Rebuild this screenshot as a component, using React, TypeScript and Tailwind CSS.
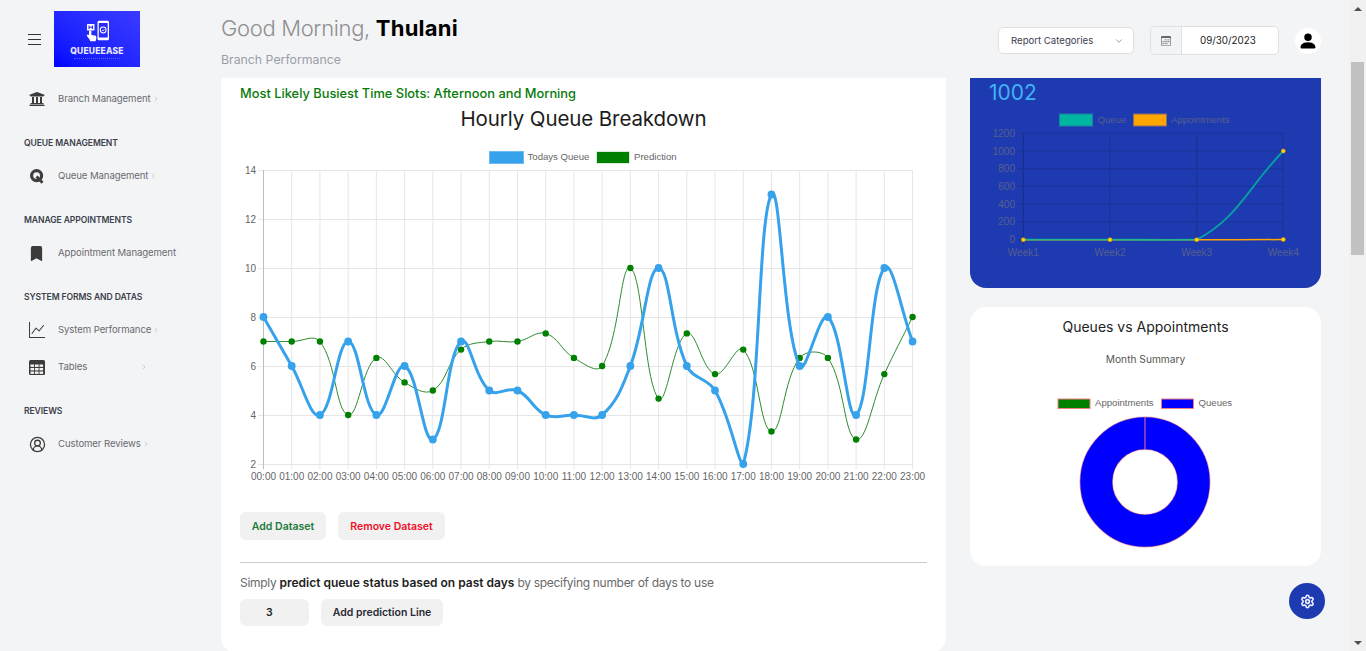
import { BsBookmarkFill, BsCalendar3, BsGraphUp, BsPersonFill } from "react-icons/bs";
import { FaUniversity } from "react-icons/fa";
import { ChevronDown, ChevronRight, CircleUserRound, Settings } from "lucide-react";
import type { ReactNode } from "react";

type Pt = [number, number];

// same curve chart.js draws with tension 0.4
function splinePath(pts: Pt[], top: number, bottom: number) {
    const t = 0.4;
    const ctrl = pts.map((cur, i) => {
        const prev = pts[i - 1] ?? cur;
        const next = pts[i + 1] ?? cur;
        const d01 = Math.hypot(cur[0] - prev[0], cur[1] - prev[1]);
        const d12 = Math.hypot(next[0] - cur[0], next[1] - cur[1]);
        const sum = d01 + d12 || 1;
        const fa = (t * d01) / sum;
        const fb = (t * d12) / sum;
        const clamp = (y: number) => Math.min(bottom, Math.max(top, y));
        return {
            p: [cur[0] - fa * (next[0] - prev[0]), clamp(cur[1] - fa * (next[1] - prev[1]))],
            n: [cur[0] + fb * (next[0] - prev[0]), clamp(cur[1] + fb * (next[1] - prev[1]))],
        };
    });
    let d = `M${pts[0][0]} ${pts[0][1]}`;
    for (let i = 1; i < pts.length; i++) {
        d += ` C${ctrl[i - 1].n[0]} ${ctrl[i - 1].n[1]} ${ctrl[i].p[0]} ${ctrl[i].p[1]} ${pts[i][0]} ${pts[i][1]}`;
    }
    return d;
}

const hours = Array.from({ length: 24 }, (_, i) => `${String(i).padStart(2, "0")}:00`);
const queue = [8, 6, 4, 7, 4, 6, 3, 7, 5, 5, 4, 4, 4, 6, 10, 6, 5, 2, 13, 6, 8, 4, 10, 7];
const prediction = [7, 7, 7, 4, 6.33, 5.33, 5, 6.67, 7, 7, 7.33, 6.33, 6, 10, 4.67, 7.33, 5.67, 6.67, 3.33, 6.33, 6.33, 3, 5.67, 8];

const hx = (i: number) => 263.5 + i * 28.22;
const hy = (v: number) => 464 - (v - 2) * 24.5;

function HourlyChart() {
    const queuePts = queue.map((v, i): Pt => [hx(i), hy(v)]);
    const predPts = prediction.map((v, i): Pt => [hx(i), hy(v)]);
    return (
        <svg width="687" height="345" viewBox="240 145 687 345" className="block" fontFamily="'Liberation Sans', sans-serif">
            <rect x="489.5" y="151.5" width="34" height="12" fill="#36a2eb" stroke="#6db9f0" />
            <text x="527.5" y="160" fontSize="9.6" fill="#666">Todays Queue</text>
            <rect x="596.5" y="151.5" width="33" height="12" fill="#008000" stroke="#d8ead8" />
            <text x="634" y="160" fontSize="9.6" fill="#666">Prediction</text>

            {[14, 12, 10, 8, 6, 4, 2].map((v) => (
                <g key={v}>
                    <line x1="258" x2="912.5" y1={hy(v) + 0.5} y2={hy(v) + 0.5} stroke="#e6e6e6" />
                    <text x="256" y={hy(v) + 3.5} fontSize="10" fill="#666" textAnchor="end">{v}</text>
                </g>
            ))}
            {hours.map((h, i) => (
                <g key={h}>
                    <line x1={hx(i)} x2={hx(i)} y1="170" y2="469" stroke={i === 0 ? "#bdbdbd" : "#e6e6e6"} />
                    <text x={hx(i)} y="480" fontSize="10" fill="#666" textAnchor="middle">{h}</text>
                </g>
            ))}

            <path d={splinePath(predPts, 170, 464)} fill="none" stroke="#2e8b2e" strokeWidth="1" />
            {predPts.map((p) => (
                <circle key={p[0]} cx={p[0]} cy={p[1]} r="3.2" fill="#008000" />
            ))}
            <path d={splinePath(queuePts, 170, 464)} fill="none" stroke="#36a2eb" strokeWidth="3" />
            {queuePts.map((p) => (
                <circle key={p[0]} cx={p[0]} cy={p[1]} r="3.9" fill="#36a2eb" />
            ))}
        </svg>
    );
}

function WeeklyChart() {
    const xs = [1023.3, 1110, 1196.7, 1283.3];
    const wy = (v: number) => 239.7 - v * 0.0887;
    const q: Pt[] = [0, 0, 0, 1000].map((v, i) => [xs[i], wy(v)]);
    const a: Pt[] = [0, 0, 0, 1].map((v, i) => [xs[i], wy(v)]);
    return (
        <svg width="351" height="180" viewBox="970 105 351 180" className="block" fontFamily="'Liberation Sans', sans-serif">
            <rect x="1059.5" y="114" width="33" height="12" fill="#00b5a0" stroke="#1a7fa0" />
            <text x="1097.5" y="122.5" fontSize="9.6" fill="#565f8e">Queue</text>
            <rect x="1133.5" y="114" width="33" height="12" fill="#ffa500" stroke="#8d6a6a" />
            <text x="1171" y="122.5" fontSize="9.6" fill="#565f8e">Appointments</text>

            {[1200, 1000, 800, 600, 400, 200, 0].map((v) => (
                <g key={v}>
                    <line x1="1018" x2="1283.3" y1={wy(v)} y2={wy(v)} stroke="#1b3295" />
                    <text x="1015" y={wy(v) + 3.5} fontSize="10" fill="#565f8e" textAnchor="end">{v}</text>
                </g>
            ))}
            {xs.map((x, i) => (
                <g key={x}>
                    <line x1={x} x2={x} y1="133" y2="245" stroke={i === 0 ? "#182c86" : "#1b3295"} />
                    <text x={x} y="256" fontSize="10" fill="#565f8e" textAnchor="middle">{`Week${i + 1}`}</text>
                </g>
            ))}

            <path d={splinePath(a, 133, 240)} fill="none" stroke="#ffa500" strokeWidth="1.5" />
            <path d={splinePath(q, 133, 240)} fill="none" stroke="#00b5a0" strokeWidth="1.8" opacity="0.85" />
            {[...a, q[3]].map((p) => (
                <circle key={p[0] + p[1]} cx={p[0]} cy={p[1]} r="2" fill="#ffd400" stroke="#e8a000" strokeWidth="0.5" />
            ))}
        </svg>
    );
}

function Donut() {
    return (
        <svg width="351" height="160" viewBox="970 392 351 160" className="block" fontFamily="'Liberation Sans', sans-serif">
            <rect x="1058" y="399" width="32" height="9.5" fill="#008000" stroke="#f08080" />
            <text x="1095" y="406" fontSize="9.6" fill="#666">Appointments</text>
            <rect x="1161.5" y="399" width="32" height="9.5" fill="#0000ff" stroke="#f08080" />
            <text x="1198.5" y="406" fontSize="9.6" fill="#666">Queues</text>
            <circle cx="1145" cy="482" r="48.75" fill="none" stroke="#f4a0a0" strokeWidth="33.5" />
            <circle cx="1145" cy="482" r="48.75" fill="none" stroke="#0000ff" strokeWidth="32" />
            <line x1="1145" x2="1145" y1="417" y2="449.5" stroke="#e8788c" />
        </svg>
    );
}

function Logo() {
    return (
        <div className="w-[86px] h-[56px] bg-gradient-to-tr from-[#0000ff] to-[#3a3aff] flex flex-col items-center pt-[9px]">
            <svg width="26" height="25" viewBox="0 0 26 25" fill="white">
                <rect x="3" y="4" width="7.5" height="6.5" rx="0.5" />
                <path d="M5 5.5v3.5M8.4 5.5v3.5M5 7.2h3.4" stroke="#1a1aff" strokeWidth="1" />
                <path d="M5 11.5a1.2 1.2 0 0 1 2.4 0v3.4l3.6.7a1.6 1.6 0 0 1 1.3 1.6v1.6l-.8 2.4H6.2l-.6-1.8-2.6-3.4c-.6-1 .7-2 1.5-1.2l.5.5z" />
                <rect x="13.5" y="0.8" width="11.5" height="19.5" rx="1.5" />
                <rect x="14.8" y="3" width="8.9" height="14.5" fill="#2a2aff" />
                <circle cx="19.2" cy="10" r="3.4" fill="white" />
                <circle cx="19.2" cy="10" r="2.4" fill="#2a2aff" />
                <path d="M17.9 10l1 1 1.6-1.8" stroke="white" strokeWidth="0.8" fill="none" />
            </svg>
            <span className="text-[8.5px] leading-[11px] mt-[1px] font-extrabold text-[#e8e8ff] tracking-[0.2px]">QUEUEEASE</span>
            <div className="mt-[1px] w-[46px] h-[1px] border-t border-dotted border-[#5a5aff]" />
        </div>
    );
}

function QIcon() {
    return (
        <svg width="16" height="16" viewBox="0 0 16 16" fill="none" stroke="#3f3f3f" strokeWidth="3.2">
            <circle cx="7.6" cy="7.6" r="5" />
            <path d="M7.5 8.5l6 6.2" strokeWidth="2.8" />
        </svg>
    );
}

function HamburgerIcon() {
    return (
        <svg width="13" height="11" viewBox="0 0 13 11" stroke="#333" strokeWidth="1">
            <path d="M0 .5h13M0 5.5h13M0 10.5h13" />
        </svg>
    );
}

function TableIcon() {
    const cols = [1.5, 6, 10.5];
    const rows = [4.5, 8, 11.5];
    return (
        <svg width="16" height="15" viewBox="0 0 16 15">
            <rect width="16" height="15" rx="1.5" fill="#3b3b3b" />
            {rows.map((y) =>
                cols.map((x) => <rect key={`${x}-${y}`} x={x} y={y} width="3.6" height="2.4" fill="#f3f4f6" />)
            )}
        </svg>
    );
}

function NavItem({ icon, label, arrow }: { icon: ReactNode; label: string; arrow?: number }) {
    return (
        <div className="flex items-center h-[37px] pl-[29px]">
            <span className="w-[29px] flex items-center text-[#3b3b3b]">{icon}</span>
            <span className="text-[9.6px] text-[#6a6a70] whitespace-nowrap tracking-[-0.1px]">{label}</span>
            {arrow !== undefined && <ChevronRight size={8} strokeWidth={1.5} className="text-[#a8a8a8]" style={{ marginLeft: arrow }} />}
        </div>
    );
}

function SectionLabel({ children }: { children: ReactNode }) {
    return <div className="h-4 mt-[17px] mb-[7px] pl-[24px] text-[8.6px] leading-4 font-semibold text-[#3d414b] tracking-[-0.1px]">{children}</div>;
}

function Sidebar() {
    return (
        <aside className="w-[221px] shrink-0">
            <div className="flex items-center pl-[28px] pt-[11px] gap-[13px]">
                <HamburgerIcon />
                <Logo />
            </div>
            <div className="mt-[13.5px]">
                <NavItem icon={<FaUniversity size={16} />} label="Branch Management" arrow={1} />
                <SectionLabel>QUEUE MANAGEMENT</SectionLabel>
                <NavItem icon={<QIcon />} label="Queue Management" arrow={1} />
                <SectionLabel>MANAGE APPOINTMENTS</SectionLabel>
                <NavItem icon={<BsBookmarkFill size={15} />} label="Appointment Management" />
                <SectionLabel>SYSTEM FORMS AND DATAS</SectionLabel>
                <NavItem icon={<BsGraphUp size={16} />} label="System Performance" arrow={1} />
                <NavItem icon={<TableIcon />} label="Tables" arrow={53} />
                <SectionLabel>REVIEWS</SectionLabel>
                <NavItem icon={<CircleUserRound size={17} strokeWidth={1.8} />} label="Customer Reviews" arrow={1} />
            </div>
        </aside>
    );
}

function Header() {
    return (
        <header className="h-[78px] shrink-0 flex justify-between pr-[28px]">
            <div className="pt-[13px]">
                <div className="text-[22px] leading-[30px] font-light text-[#8f8f8f] tracking-[-0.34px]">
                    Good Morning, <span className="font-bold text-black tracking-[0.25px]">Thulani</span>
                </div>
                <div className="mt-[9px] text-[12.3px] leading-4 text-[#9a9ea6]">Branch Performance</div>
            </div>
            <div className="flex items-start pt-[26px]">
                <div className="mt-[1px] w-[136px] h-[27px] bg-white border border-[#e0e0e0] rounded-[5px] flex items-center justify-between pl-[12px] pr-[9px] pt-[1px] text-[9.6px] text-[#3e3e50]">
                    Report Categories
                    <ChevronDown size={10} strokeWidth={1.5} className="text-[#666]" />
                </div>
                <div className="ml-[16px] w-[129px] h-[29px] bg-white border border-[#e0e0e0] rounded-[5px] flex">
                    <div className="w-[31px] bg-[#f3f4f6] border-r border-[#e0e0e0] rounded-l-[5px] flex items-center justify-center text-[#666]">
                        <BsCalendar3 size={10} />
                    </div>
                    <div className="flex-1 pl-[18px] text-[9.8px] leading-[27px] text-[#222]">09/30/2023</div>
                </div>
                <div className="ml-[16px] mt-[2px] w-[26px] h-[26px] bg-white rounded-full flex items-center justify-center text-black">
                    <BsPersonFill size={20} />
                </div>
            </div>
        </header>
    );
}

function MainCard() {
    return (
        <section className="w-[725px] h-[575px] shrink-0 bg-white rounded-b-2xl px-[19px] pt-[8px]">
            <div className="text-[12.85px] leading-4 font-medium text-[#087a08]">Most Likely Busiest Time Slots: Afternoon and Morning</div>
            <h2 className="mt-[1px] text-[20.5px] leading-[32px] text-center text-[#1c1c1c] tracking-[-0.1px]">Hourly Queue Breakdown</h2>
            <div className="mt-[10px]">
                <HourlyChart />
            </div>
            <div className="mt-[22px] flex gap-[12px]">
                <button className="w-[86px] h-[28px] pt-[1px] rounded-md bg-[#f1f1f1] text-[10.5px] font-semibold text-[#1f7a3c]">Add Dataset</button>
                <button className="w-[107px] h-[28px] pt-[1px] rounded-md bg-[#f1f1f1] text-[10.5px] font-semibold text-[#f0102a]">Remove Dataset</button>
            </div>
            <div className="mt-[22px] border-t border-[#cccccc]" />
            <p className="mt-[12px] text-[12px] leading-4 text-[#6a6a6a] tracking-[-0.3px]">
                Simply <span className="font-semibold text-[#222] tracking-[0px]">predict queue status based on past days</span> by specifying number of days to use
            </p>
            <div className="mt-[8px] flex gap-[12px]">
                <div className="w-[69px] h-[27px] rounded-md bg-[#f1f1f1] pl-[26px] text-[10.5px] leading-[27px] font-semibold text-[#222]">3</div>
                <button className="w-[122px] h-[27px] rounded-md bg-[#f1f1f1] text-[10.5px] font-semibold text-[#2a2a35]">Add prediction Line</button>
            </div>
        </section>
    );
}

function SideCards() {
    return (
        <div className="w-[351px] shrink-0 flex flex-col gap-[19px]">
            <section className="h-[210px] bg-[#1e3ab0] rounded-b-2xl overflow-hidden">
                <div className="pt-[2px] pl-[19px] text-[21px] leading-[25px] text-[#3fb4f5]">1002</div>
                <WeeklyChart />
            </section>
            <section className="h-[259px] bg-white rounded-2xl">
                <h3 className="pt-[11px] text-[14px] leading-[18px] text-center text-[#222]">Queues vs Appointments</h3>
                <div className="mt-[16px] text-[10.2px] leading-[14px] text-center text-[#555]">Month Summary</div>
                <div className="mt-[26px]">
                    <Donut />
                </div>
            </section>
        </div>
    );
}

function ScrollBar() {
    return (
        <div className="w-[17px] shrink-0 bg-[#f1f1f1] flex flex-col items-center">
            <div className="h-[17px] flex items-center justify-center">
                <div className="w-0 h-0 border-x-[4px] border-x-transparent border-b-[4px] border-b-[#505050]" />
            </div>
            <div className="mt-[45px] h-[193px] w-[13px] bg-[#c1c1c1]" />
            <div className="mt-auto h-[17px] flex items-center justify-center">
                <div className="w-0 h-0 border-x-[4px] border-x-transparent border-t-[4px] border-t-[#505050]" />
            </div>
        </div>
    );
}

export default function App() {
    return (
        <div className="relative h-screen flex overflow-hidden bg-[#f3f4f6] font-['Inter','Noto_Sans',sans-serif]">
            <Sidebar />
            <main className="flex-1 min-w-0 flex flex-col">
                <Header />
                <div className="flex gap-6 overflow-hidden">
                    <MainCard />
                    <SideCards />
                </div>
            </main>
            <ScrollBar />
            <button className="absolute left-[1289px] top-[583px] w-9 h-9 rounded-full bg-[#1e3ab0] flex items-center justify-center text-[#eef0ff]">
                <Settings size={15} strokeWidth={2.6} />
            </button>
        </div>
    );
}
